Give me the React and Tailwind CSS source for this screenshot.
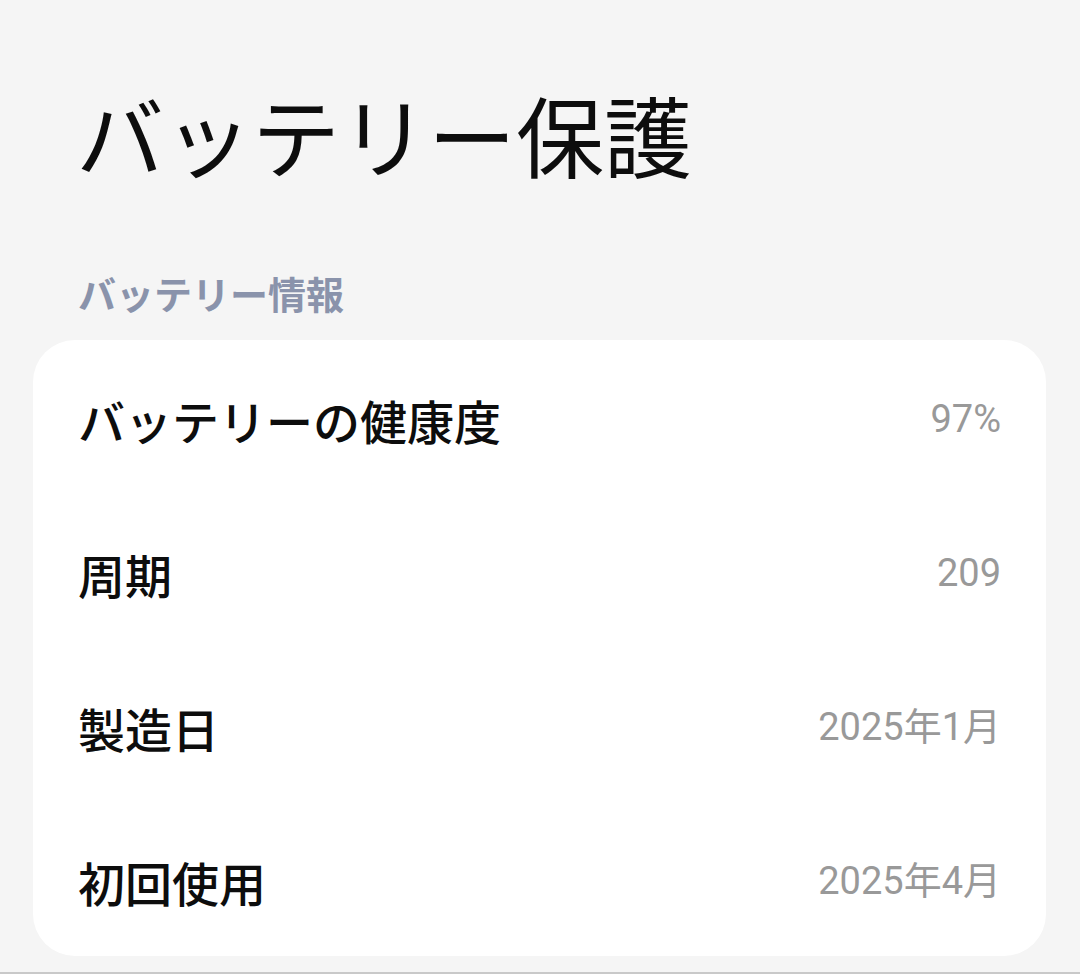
import React from 'react';

const rows = [
    { label: 'バッテリーの健康度', value: '97%' },
    { label: '周期', value: '209' },
    { label: '製造日', value: '2025年1月' },
    { label: '初回使用', value: '2025年4月' },
];

const App = () => {
    return (
        <div
            className="h-[974px] bg-[#f5f5f5] flex flex-col overflow-hidden"
            style={{ fontFamily: '"Noto Sans CJK JP", "Noto Sans", sans-serif' }}
        >
            {/* Page title */}
            <h1 className="mt-[89px] pl-[76px] text-[88px] leading-none font-normal text-[#0d0d0d]">
                バッテリー保護
            </h1>

            {/* Section header */}
            <div className="mt-[97px] pl-[78px] text-[38px] leading-none font-bold text-[#8a93ab]">
                バッテリー情報
            </div>

            {/* Info card */}
            <div className="mt-[28px] ml-[33px] mr-[34px] bg-white rounded-[42px]">
                {rows.map((row) => (
                    <div key={row.label} className="h-[154px] flex items-center justify-between px-[45px] pt-[4px]">
                        <span className="text-[47px] leading-none font-medium text-[#0d0d0d]">{row.label}</span>
                        <span
                            className="text-[38px] leading-none text-[#999999]"
                            style={{ fontFamily: 'Roboto, "Noto Sans CJK JP", sans-serif' }}
                        >
                            {row.value}
                        </span>
                    </div>
                ))}
            </div>

            <div className="mt-auto h-[2px] bg-[#c9c9c9]" />
        </div>
    );
};

export default App;
